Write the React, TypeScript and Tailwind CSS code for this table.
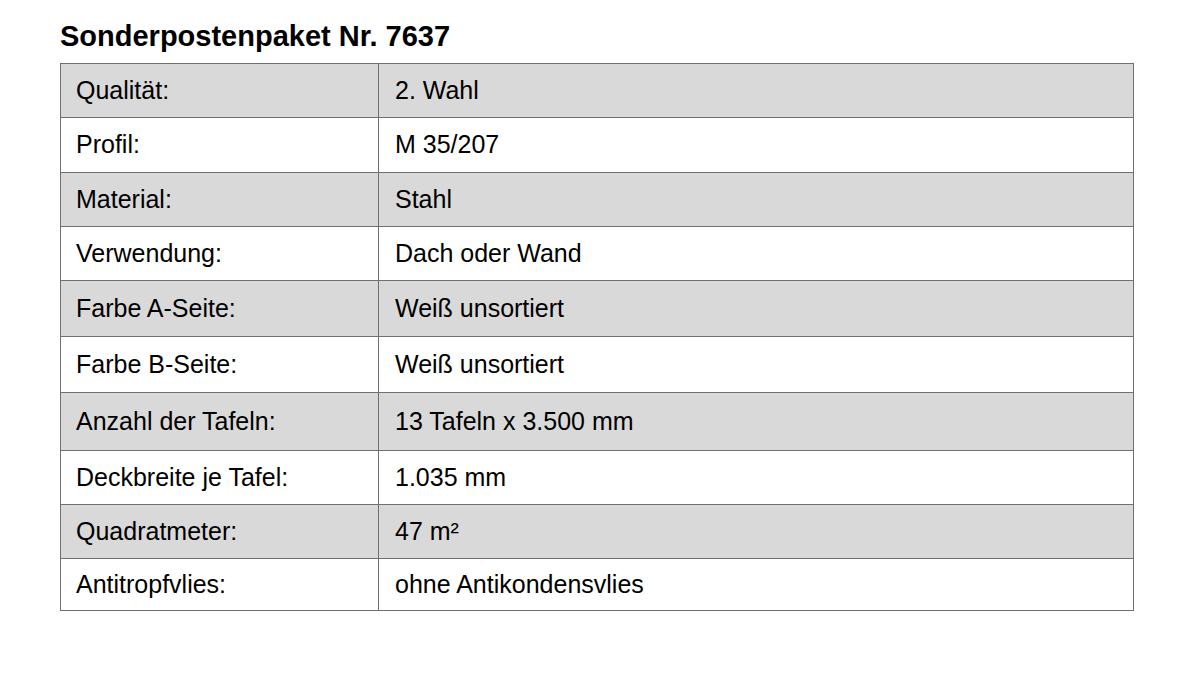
const rows: [string, string, number][] = [
  ['Qualität:', '2. Wahl', 54],
  ['Profil:', 'M 35/207', 55],
  ['Material:', 'Stahl', 54],
  ['Verwendung:', 'Dach oder Wand', 54],
  ['Farbe A-Seite:', 'Weiß unsortiert', 56],
  ['Farbe B-Seite:', 'Weiß unsortiert', 56],
  ['Anzahl der Tafeln:', '13 Tafeln x 3.500 mm', 58],
  ['Deckbreite je Tafel:', '1.035 mm', 54],
  ['Quadratmeter:', '47 m²', 54],
  ['Antitropfvlies:', 'ohne Antikondensvlies', 52],
]

export default function App() {
  return (
    <div className="w-[1200px] h-[680px] bg-white text-black font-['Liberation_Sans',Arial,sans-serif]">
      <div className="pl-[60px] pt-[18px]">
        <h1 className="text-[29px] font-bold leading-[36px] mb-[9px]">Sonderpostenpaket Nr. 7637</h1>
        <table className="w-[1074px] border-collapse text-[25px]">
          <tbody>
            {rows.map(([label, value, h], i) => (
              <tr key={label} className={i % 2 === 0 ? 'bg-[#d9d9d9]' : 'bg-white'} style={{ height: h }}>
                <td className="w-[318px] border border-[#707070] pl-[15px] align-middle">{label}</td>
                <td className="border border-[#707070] pl-[16px] align-middle">{value}</td>
              </tr>
            ))}
          </tbody>
        </table>
      </div>
    </div>
  )
}
